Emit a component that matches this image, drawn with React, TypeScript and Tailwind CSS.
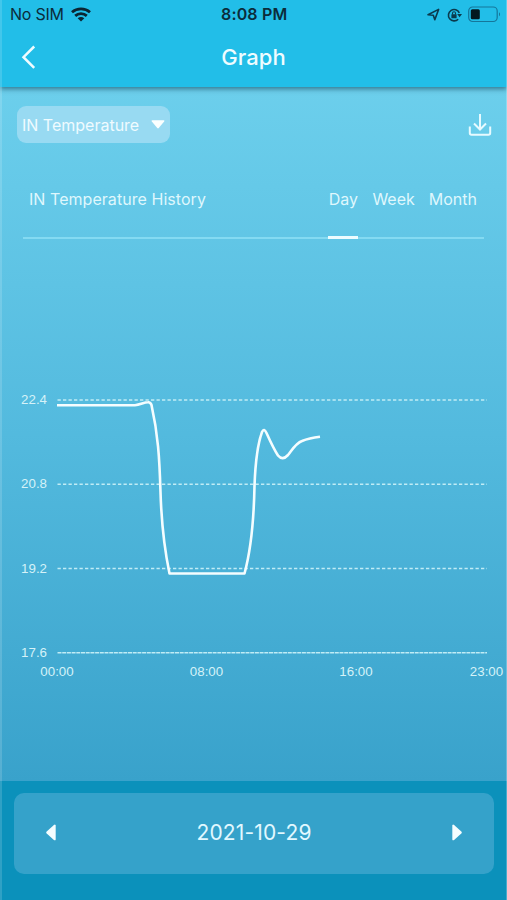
const gridLines = [
  { y: 400, label: "22.4" },
  { y: 484.3, label: "20.8" },
  { y: 568.5, label: "19.2" },
  { y: 652.8, label: "17.6" },
];

const hours = [
  { x: 57, label: "00:00" },
  { x: 206.5, label: "08:00" },
  { x: 356, label: "16:00" },
  { x: 486.5, label: "23:00" },
];

function StatusBar() {
  return (
    <div className="flex h-[29px] items-center pl-[10px] pr-[6px] text-[#0b2c3b]">
      <div className="flex w-[211px] items-center">
        <span className="w-[54px] whitespace-nowrap text-[16px] leading-[29px] tracking-[-0.25px]">No SIM</span>
        <svg className="ml-[7px] h-[15px] w-[20px]" viewBox="0 0 20 15" fill="none" stroke="#0b2633" strokeWidth="2.8">
          <path d="M1 5.2C6 .8 14 .8 19 5.2" />
          <path d="M4.200 8.900c3.300-3 8.300-3 11.600 0" />
          <path d="M6.700 11.200c1.900-1.700 4.700-1.700 6.600 0L10 14.600z" fill="#0b2633" stroke="none" />
        </svg>
      </div>
      <span className="whitespace-nowrap text-[16px] font-semibold leading-[29px] tracking-[0.15px]">8:08 PM</span>
      <div className="ml-auto flex items-center">
        <svg className="h-[13px] w-[13px]" viewBox="0 0 13 13" fill="none" stroke="#0b3a4d" strokeWidth="1.6" strokeLinejoin="round">
          <path d="M1 6.800 11.600 1.400 7.800 11.800 6.300 7.200z" />
        </svg>
        <svg className="ml-[7px] h-[14px] w-[15px]" viewBox="0 0 15 14" fill="none" stroke="#0b3a4d" strokeWidth="1.6">
          <path d="M12.300 4.800A5.700 5.700 0 1 0 11.200 11.200" />
          <path d="M10.200 6h4.800l-2.400 3.200z" fill="#0b3a4d" stroke="none" />
          <rect x="4.400" y="6.200" width="5.200" height="4" rx=".5" fill="#0b3a4d" stroke="none" />
          <path d="M5.500 6.500V5.200a1.500 1.500 0 0 1 3 0v1.300" strokeWidth="1.1" />
        </svg>
        <svg className="ml-[6px] h-[17px] w-[33px]" viewBox="0 0 33 17" fill="none">
          <rect x=".7" y="1" width="28.500" height="14.500" rx="4" stroke="#15769a" strokeWidth="1.2" />
          <rect x="2.800" y="3.300" width="9" height="10" rx="1.500" fill="#031820" />
          <path d="M31 6.300c1.400.6 1.400 3.400 0 4z" fill="#15769a" />
        </svg>
      </div>
    </div>
  );
}

function Chart() {
  return (
    <svg className="block h-[541px] w-[507px]" viewBox="0 240 507 541" fill="none">
      <g stroke="#c0ecf5" strokeWidth="1.6">
        {gridLines.map((line, i) => (
          <path key={line.label} d={`M57.5 ${line.y}H487`} strokeDasharray={i === 3 ? "4 .7" : "3.3 2.2"} />
        ))}
      </g>
      <g fill="#d5f2f8" fontSize="13.3" fontFamily="'Liberation Sans', Arial, sans-serif">
        {gridLines.map((line) => (
          <text key={line.label} x="47" y={line.y + 4} textAnchor="end">{line.label}</text>
        ))}
        {hours.map((hour) => (
          <text key={hour.label} x={hour.x} y="676.4" textAnchor="middle">{hour.label}</text>
        ))}
      </g>
      <path
        d="M57 405.200H135C140 405 144 402.200 148 402.200Q150.500 402 151.500 405C158 434 159.500 458 160.500 492C161.500 525 165 552 169.500 573.500H244.500C252 546 254 512 254.500 486C255.500 458 258 443 262 432Q264 427.500 266.500 433C271 443 275 451 278 455.500Q282.500 461 288 455C292 450 296 443 302 441Q309 438 320 436.700"
        stroke="#f4fdff"
        strokeWidth="2.6"
        strokeLinejoin="round"
      />
    </svg>
  );
}

export default function App() {
  return (
    <div className="relative flex h-[900px] w-[507px] flex-col overflow-hidden bg-[#0b91bb] font-[Inter,'Liberation_Sans',sans-serif]">
      <header className="relative z-10 h-[87px] shrink-0 bg-[#22bee8] shadow-[0_2px_5px_rgba(20,70,90,0.65)]">
        <StatusBar />
        <div className="grid h-[56px] grid-cols-[60px_1fr_60px] items-center text-[#effcff]">
          <svg className="ml-[21px] h-[24px] w-[16px]" viewBox="0 0 16 24" fill="none" stroke="currentColor" strokeWidth="2.5">
            <path d="M13.200 1.500 2.500 12.200 13.200 22.800" />
          </svg>
          <h1 className="text-center text-[22px] font-medium leading-[28px] tracking-[0.1px]">Graph</h1>
        </div>
      </header>

      <main className="h-[694px] shrink-0 bg-linear-to-b from-[#6ccfec] via-[#53bade] to-[#39a2cb]">
        <div className="flex h-[75px] items-center justify-between pl-[17px] pr-[15px]">
          <button className="flex h-[37px] w-[153px] items-center justify-between rounded-[9px] bg-[#98daf2] pl-[5px] pr-[5px] text-[16px] text-[#effbff]">
            <span className="whitespace-nowrap">IN Temperature</span>
            <svg className="h-[9px] w-[14px]" viewBox="0 0 15 9" fill="#fbffff">
              <path d="M1.500 0h12q1.500 0 .6 1.200L8.300 8.300q-.8.900-1.600 0L.9 1.200Q0 0 1.500 0" />
            </svg>
          </button>
          <svg className="h-[24px] w-[24px]" viewBox="0 0 24 24" fill="none" stroke="#e6faff" strokeWidth="2">
            <path d="M12 1v15M6 10.500l6 6 6-6" />
            <path d="M1.800 13.500v6.500q0 1.700 1.700 1.700h17q1.700 0 1.700-1.700v-6.500" />
          </svg>
        </div>
        <div className="mx-[23px] mb-px flex h-[77px] justify-between border-b-2 border-[#84daf2] pl-[6px] pr-[7px] pt-[26px] text-[16px] leading-[22px] text-[#dff7fd]">
          <h2 className="whitespace-nowrap tracking-[0.05px]">IN Temperature History</h2>
          <nav className="flex gap-[14px]">
            <span className="h-[51px] w-[30px] border-b-[3px] border-[#edfcff] text-center">Day</span>
            <span className="h-[22px]">Week</span>
            <span className="h-[22px]">Month</span>
          </nav>
        </div>
        <Chart />
      </main>

      <footer className="grow px-[14px] pt-[12px]">
        <div className="flex h-[81px] w-[480px] items-center justify-between rounded-[10px] bg-[#35a2ca] px-[32px] pb-[2px] text-[#e1f8ff]">
          <svg className="h-[17px] w-[10px]" viewBox="0 0 10 17" fill="#f4fdff">
            <path d="M9.700 1.500v14q-.4 1.400-1.800.5L.7 9.500q-1-1 0-2L7.900 1q1.300-1 1.800.5" />
          </svg>
          <span className="text-[21px] leading-[28px] tracking-[0.15px]">2021-10-29</span>
          <svg className="h-[17px] w-[10px]" viewBox="0 0 10 17" fill="#f4fdff">
            <path d="M.3 1.500v14q.4 1.400 1.800.5l7.200-6.500q1-1 0-2L2.100 1Q.8 0 .3 1.500" />
          </svg>
        </div>
      </footer>
      <div className="absolute inset-y-0 left-0 z-20 w-[2px] bg-white/15" />
      <div className="absolute inset-y-0 right-0 z-20 w-px bg-white/25" />
    </div>
  );
}
